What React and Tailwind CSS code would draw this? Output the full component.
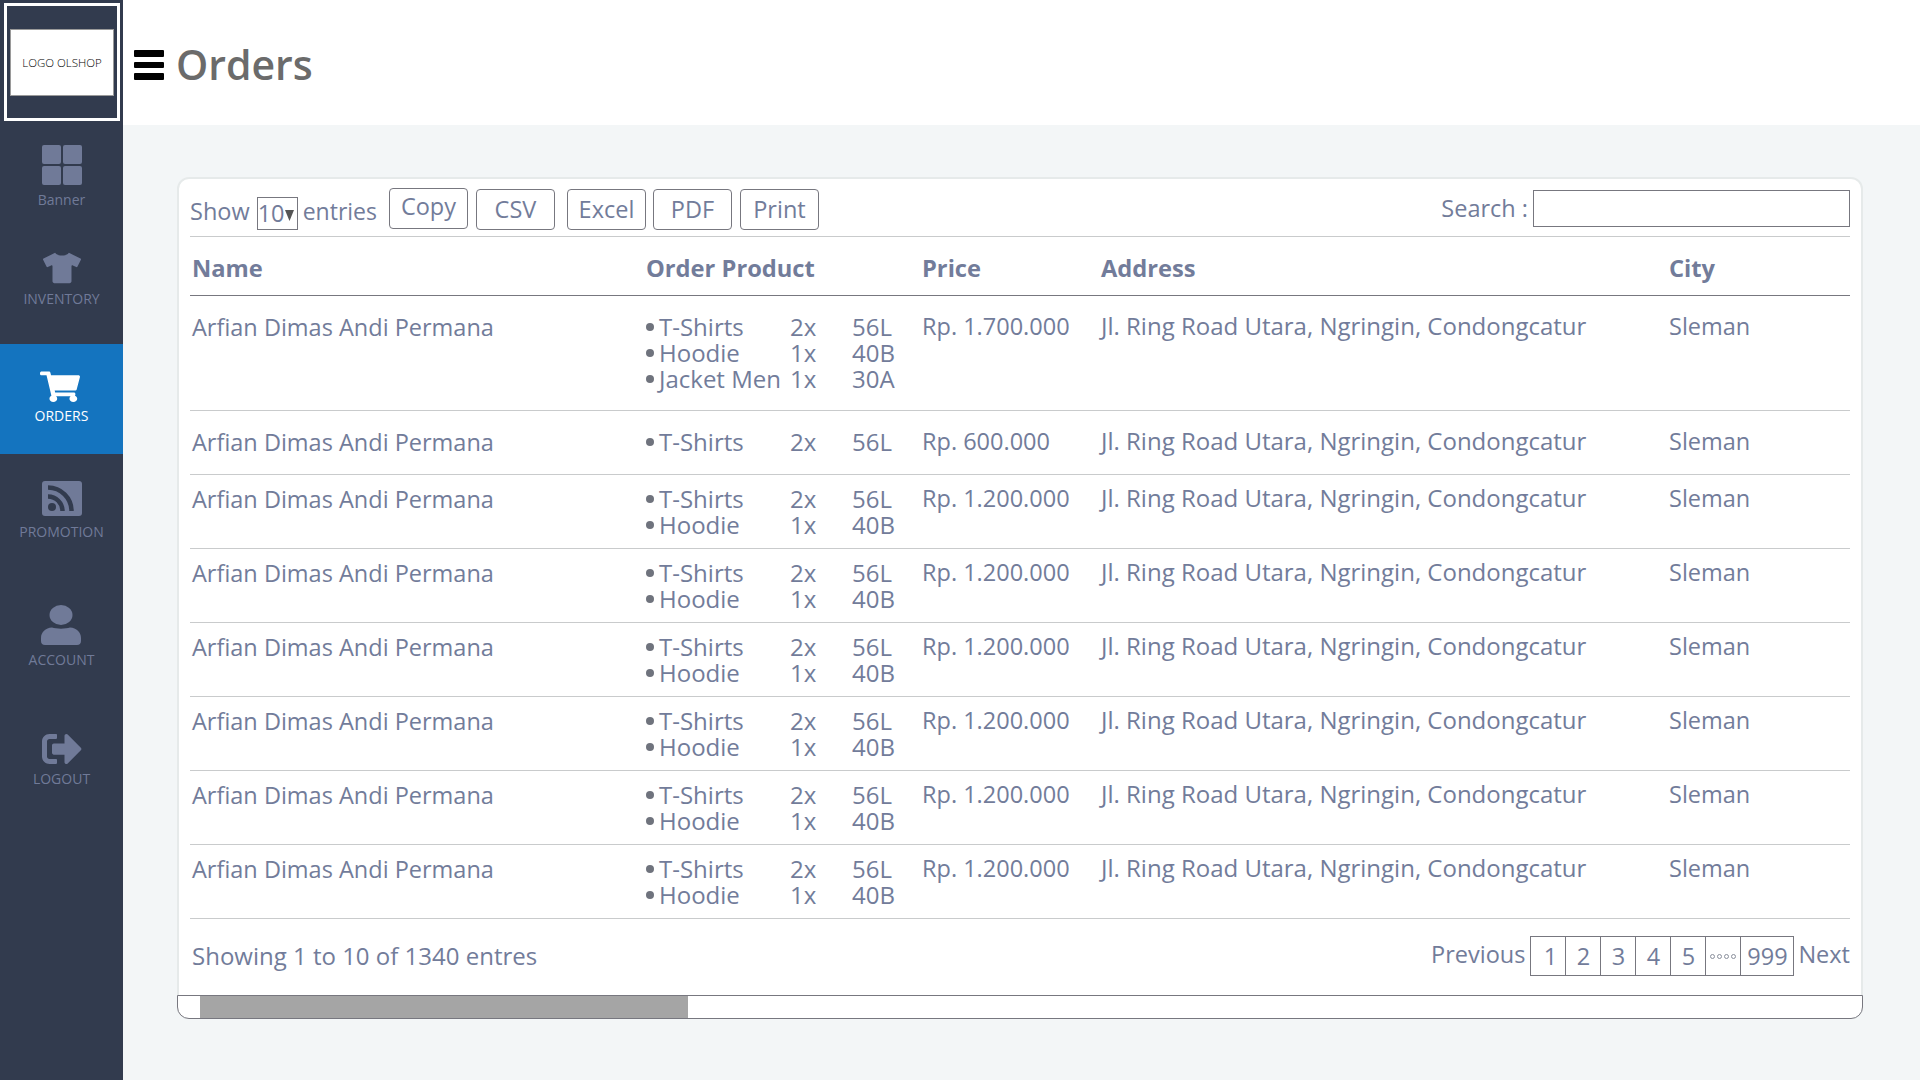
import React from 'react';
import { FaTshirt, FaShoppingCart, FaSignOutAlt } from 'react-icons/fa';

const TWO = [
  ['T-Shirts', '2x', '56L'],
  ['Hoodie', '1x', '40B'],
];

const ROWS = [
  { h: 'h-[115px]', pt: 'pt-[18px]', price: 'Rp. 1.700.000', items: [...TWO, ['Jacket Men', '1x', '30A']] },
  { h: 'h-[64px]', pt: 'pt-[18px]', price: 'Rp. 600.000', items: [TWO[0]] },
  { h: 'h-[74px]', pt: 'pt-[11px]', price: 'Rp. 1.200.000', items: TWO },
  { h: 'h-[74px]', pt: 'pt-[11px]', price: 'Rp. 1.200.000', items: TWO },
  { h: 'h-[74px]', pt: 'pt-[11px]', price: 'Rp. 1.200.000', items: TWO },
  { h: 'h-[74px]', pt: 'pt-[11px]', price: 'Rp. 1.200.000', items: TWO },
  { h: 'h-[74px]', pt: 'pt-[11px]', price: 'Rp. 1.200.000', items: TWO },
  { h: 'h-[74px]', pt: 'pt-[11px]', price: 'Rp. 1.200.000', items: TWO },
];

const COLS = 'grid grid-cols-[456px_276px_179px_568px_1fr]';

function GridIcon() {
  return (
    <svg width="40" height="40" viewBox="0 0 40 40" fill="currentColor">
      <rect x="0" y="0" width="19" height="19" rx="2" />
      <rect x="21" y="0" width="19" height="19" rx="2" />
      <rect x="0" y="21" width="19" height="19" rx="2" />
      <rect x="21" y="21" width="19" height="19" rx="2" />
    </svg>
  );
}

function RssIcon() {
  return (
    <svg width="40" height="35" viewBox="0 0 40 35" fill="currentColor">
      <rect width="40" height="35" rx="3" />
      <circle cx="10" cy="26" r="4" fill="#323b4e" />
      <path d="M6 15.5 A 14.5 14.5 0 0 1 20.5 30" fill="none" stroke="#323b4e" strokeWidth="4.5" />
      <path d="M6 6.5 A 23.5 23.5 0 0 1 29.5 30" fill="none" stroke="#323b4e" strokeWidth="4.5" />
    </svg>
  );
}

function UserIcon() {
  return (
    <svg width="40" height="40" viewBox="0 0 40 40" fill="currentColor" className="-translate-x-[1px]">
      <ellipse cx="20" cy="10" rx="11.5" ry="10" />
      <path d="M11 22.5 C 15 24, 25 24, 29 22.5 C 35.5 23, 40 27, 40 33 L 40 36 C 40 38.5, 38.5 40, 36 40 L 4 40 C 1.5 40, 0 38.5, 0 36 L 0 33 C 0 27, 4.5 23, 11 22.5 Z" />
    </svg>
  );
}

function NavItem({ icon, label, h, pt, active, labelClass }) {
  return (
    <div className={`${h} ${pt} flex flex-col items-center ${active ? 'bg-[#1474bf] text-white' : 'text-[#707a98]'}`}>
      <div className="h-[40px] flex items-end justify-center">{icon}</div>
      <div className={`text-[14px] leading-[20px] ${labelClass}`}>{label}</div>
    </div>
  );
}

function Sidebar() {
  return (
    <aside className="w-[123px] shrink-0 h-full bg-[#323b4e]">
      <div className="h-[125px] pt-[3px] pl-[4px]">
        <div className="w-[116px] h-[118px] border-[3px] border-white pt-[23px] pl-[3px]">
          <div className="w-[104px] h-[67px] bg-white border border-[#9a9a9a] flex items-center justify-center text-[11.5px] font-light text-black whitespace-nowrap">
            LOGO OLSHOP
          </div>
        </div>
      </div>
      <NavItem h="h-[119px]" pt="pt-[20px]" icon={<GridIcon />} label="Banner" labelClass="mt-[5px]" />
      <NavItem h="h-[100px]" pt="pt-0" icon={<FaTshirt size={38} className="translate-y-[3px]" />} label="INVENTORY" labelClass="mt-[5px]" />
      <NavItem h="h-[110px]" pt="pt-[18px]" active icon={<FaShoppingCart size={40} className="-translate-x-[2px] translate-y-[2px] origin-bottom scale-y-[0.86]" />} label="ORDERS" labelClass="mt-[4px]" />
      <NavItem h="h-[121px]" pt="pt-[22px]" icon={<RssIcon />} label="PROMOTION" labelClass="mt-[6px]" />
      <NavItem h="h-[125px]" pt="pt-[30px]" icon={<UserIcon />} label="ACCOUNT" labelClass="mt-[5px]" />
      <NavItem pt="pt-[24px]" h="h-[100px]" icon={<FaSignOutAlt size={40} className="translate-y-[5px]" />} label="LOGOUT" labelClass="mt-[5px]" />
    </aside>
  );
}

function Btn({ children, className }) {
  return (
    <div className={`h-[41px] w-[79px] border border-[#77777f] rounded-[4px] flex items-center justify-center ${className}`}>
      {children}
    </div>
  );
}

function Products({ items, pt }) {
  return (
    <div className={`${pt} leading-[26px] text-[24px]`}>
      {items.map((it) => (
        <div key={it[0]} className="grid grid-cols-[13px_131px_62px_1fr] items-center">
          <span className="w-[8px] h-[8px] rounded-full bg-[#6f737d]" />
          <span className="whitespace-nowrap">{it[0]}</span>
          <span>{it[1]}</span>
          <span>{it[2]}</span>
        </div>
      ))}
    </div>
  );
}

function Row({ row }) {
  return (
    <div className={`${COLS} ${row.h} border-b border-[#c9cbcc]`}>
      <div className={`${row.pt} pl-[2px] leading-[26px]`}>Arfian Dimas Andi Permana</div>
      <Products items={row.items} pt={row.pt} />
      <div className={`${row.pt} leading-[26px] -mt-[1px]`}>{row.price}</div>
      <div className={`${row.pt} leading-[26px] -mt-[1px] text-[24px]`}>Jl. Ring Road Utara, Ngringin, Condongcatur</div>
      <div className={`${row.pt} leading-[26px] -mt-[1px]`}>Sleman</div>
    </div>
  );
}

function Pager() {
  const pages = ['1', '2', '3', '4', '5', 'dots', '999'];
  return (
    <div className="flex items-center">
      <span className="mr-[5px] -mt-[3px]">Previous</span>
      <div className="flex h-[40px] border border-[#77777f]">
        {pages.map((p, i) => (
          <div
            key={p}
            className={`${p === '999' ? 'w-[53px]' : p === '1' ? 'w-[34px] pl-[4px]' : 'w-[35px]'} pt-[1px] flex items-center justify-center gap-[2px] ${i ? 'border-l border-[#77777f]' : ''}`}
          >
            {p === 'dots'
              ? [0, 1, 2, 3].map((d) => (
                  <span key={d} className="w-[5px] h-[5px] rounded-full border border-[#8a8f9c]" />
                ))
              : p}
          </div>
        ))}
      </div>
      <span className="ml-[4px] -mt-[3px]">Next</span>
    </div>
  );
}

export default function App() {
  return (
    <div className="flex h-screen overflow-hidden font-['Open_Sans',sans-serif] text-[#727c9a] text-[23.5px]">
      <Sidebar />
      <main className="flex-1 bg-[#f3f6f7]">
        <header className="h-[125px] bg-white flex items-center pl-[11px] pt-[3px] gap-[10px] text-[#6b6b6b]">
          <svg width="32" height="30" viewBox="0 0 32 30" fill="black" className="translate-y-[1px]">
            <rect y="0" width="30" height="7" rx="1" />
            <rect y="12" width="30" height="6" rx="1" />
            <rect y="23" width="30" height="7" rx="1" />
          </svg>
          <h1 className="text-[41px] font-semibold leading-none">Orders</h1>
        </header>
        <section className="mt-[52px] ml-[54px] w-[1686px] h-[842px] bg-white border-2 border-[#e6eaea] rounded-[12px] flex flex-col">
          <div className="pl-[11px] pr-[11px] flex-1">
            <div className="h-[58px] flex items-start border-b border-[#c9cbcc] pt-[10px]">
              <span className="mt-[5px]">Show</span>
              <div className="ml-[7px] mt-[8px] w-[41px] h-[33px] border border-[#77777f] flex items-center whitespace-nowrap overflow-hidden">
                10
                <svg width="9" height="11" viewBox="0 0 9 11" fill="#555" className="mt-[3px]">
                  <path d="M0 0 H9 L4.5 11 Z" />
                </svg>
              </div>
              <span className="ml-[5px] mt-[5px] text-[23px]">entries</span>
              <div className="ml-[12px] flex">
                <Btn className="-mt-[1px] pb-[4px]">Copy</Btn>
                <Btn className="ml-[8px]">CSV</Btn>
                <Btn className="ml-[12px]">Excel</Btn>
                <Btn className="ml-[7px]">PDF</Btn>
                <Btn className="ml-[8px]">Print</Btn>
              </div>
              <div className="ml-auto flex items-center">
                <span className="mr-[5px] mt-[2px]">Search :</span>
                <div className="w-[317px] h-[37px] mt-[1px] border border-[#77777f] bg-white" />
              </div>
            </div>
            <div className={`${COLS} h-[59px] items-center border-b border-[#77777f] font-bold text-[23.7px] pt-[5px]`}>
              <div className="pl-[2px]">Name</div>
              <div>Order Product</div>
              <div>Price</div>
              <div>Address</div>
              <div>City</div>
            </div>
            {ROWS.map((r, i) => (
              <Row key={i} row={r} />
            ))}
            <div className="flex justify-between items-center h-[74px]">
              <span className="pl-[2px] text-[24px]">Showing 1 to 10 of 1340 entres</span>
              <Pager />
            </div>
          </div>
          <div className="h-[24px] -mx-[2px] -mb-[2px] border border-[#77777f] rounded-b-[12px] overflow-hidden shrink-0 bg-white">
            <div className="ml-[22px] h-full w-[488px] bg-[#a5a5a5]" />
          </div>
        </section>
      </main>
    </div>
  );
}
